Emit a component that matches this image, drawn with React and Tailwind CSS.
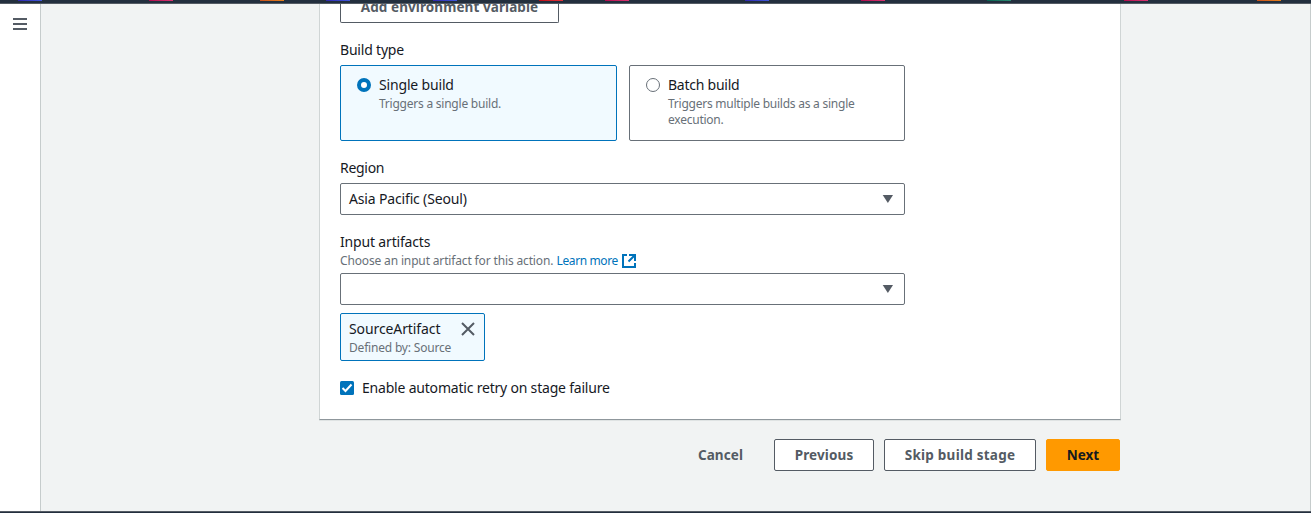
import React from "react";

// Service shortcut tiles: gap before each tile and its gradient
const services = [
  "ml-[18px] from-[#2e27ad] to-[#4157da]",
  "ml-[107px] from-[#b0084d] to-[#db3372]",
  "ml-[87px] from-[#c8511b] to-[#e5801c]",
  "ml-[42px] from-[#2e27ad] to-[#4157da]",
  "ml-[83px] from-[#2e27ad] to-[#4157da]",
  "ml-[82px] from-[#bd0816] to-[#e5333b]",
  "ml-[42px] from-[#b0084d] to-[#db3372]",
  "ml-[116px] from-[#2e27ad] to-[#4157da]",
  "ml-[92px] from-[#b0084d] to-[#db3372]",
  "ml-[102px] from-[#055f4e] to-[#2c8c74]",
  "ml-[113px] from-[#b0084d] to-[#db3372]",
  "ml-[109px] from-[#c8511b] to-[#e5801c]",
];

function Select({ children }) {
  return (
    <div className="flex h-8 items-center justify-between rounded-xs border border-[#687078] bg-white pr-[11px] pl-2">
      <span className="tracking-[-0.16px]">{children}</span>
      <svg className="h-2 w-[11px] fill-[#545b64]" viewBox="0 0 11 8">
        <path d="M0.7 0H11L5.9 8z" />
      </svg>
    </div>
  );
}

function Button({ className, children }) {
  return (
    <button className={"flex h-8 shrink-0 items-center justify-center rounded-xs border text-[13.5px] font-bold whitespace-nowrap " + className}>
      {children}
    </button>
  );
}

export default function App() {
  return (
    <div className="flex h-[513px] w-[1311px] flex-col overflow-hidden bg-[#f1f3f3] font-['Noto_Sans','Open_Sans',sans-serif] text-[14px] leading-[22px] text-[#16191f]">
      <header className="flex h-1 shrink-0 border-b border-[#545b64] bg-[#232f3e]">
        {services.map((tile, i) => (
          <div key={i} className={"h-px w-6 shrink-0 bg-linear-to-r " + tile} />
        ))}
      </header>

      <div className="flex min-h-0 flex-1">
        <aside className="w-[41px] shrink-0 border-r border-[#c6cccc] bg-white pt-[14px] pl-[13px]">
          <svg className="h-3 w-[14px] fill-[#545b64]" viewBox="0 0 14 12">
            <path d="M0 0h14v2H0zM0 5h14v2H0zM0 10h14v2H0z" />
          </svg>
        </aside>

        <main className="flex-1 border-r border-[#c6cccc] pl-[278px]">
          <section className="h-[416px] w-[802px] border border-t-0 border-[#d0d5d5] border-b-[#8f979c] bg-white px-5 shadow-[0_1px_0_#dfe3e3]">
            <div className="h-[19px] w-[219px] overflow-hidden rounded-b-xs border border-t-0 border-[#545b64] text-center text-[13.5px] font-bold text-[#545b64]">
              <div className="-mt-2 tracking-[0.08px]">Add environment variable</div>
            </div>

            <div className="mt-4 tracking-[-0.2px]">Build type</div>
            <div className="mt-1 flex w-[565px] gap-3">
              <div className="flex h-[76px] w-[277px] rounded-xs border border-[#0073bb] bg-[#f1faff] pt-2 pl-4">
                <svg className="mt-1 h-[14px] w-[14px] shrink-0" viewBox="0 0 14 14">
                  <circle cx="7" cy="7" r="5" fill="#fff" stroke="#0073bb" strokeWidth="4" />
                </svg>
                <div className="ml-2">
                  <div className="tracking-[-0.17px]">Single build</div>
                  <div className="text-[12px] leading-4 tracking-[-0.23px] text-[#687078]">Triggers a single build.</div>
                </div>
              </div>
              <div className="flex h-[76px] w-[276px] rounded-xs border border-[#687078] bg-white pt-2 pl-4">
                <svg className="mt-1 h-[14px] w-[14px] shrink-0" viewBox="0 0 14 14">
                  <circle cx="7" cy="7" r="6.5" fill="#fff" stroke="#687078" />
                </svg>
                <div className="ml-2">
                  <div className="tracking-[-0.25px]">Batch build</div>
                  <div className="text-[12px] leading-4 tracking-[-0.24px] text-[#687078]">
                    Triggers multiple builds as a single
                    <br />
                    execution.
                  </div>
                </div>
              </div>
            </div>

            <div className="mt-4 w-[565px]">
              <div className="mb-1 tracking-[-0.3px]">Region</div>
              <Select>Asia Pacific (Seoul)</Select>
            </div>

            <div className="mt-4 w-[565px]">
              <div className="tracking-[-0.17px]">Input artifacts</div>
              <div className="mb-1 flex h-4 items-center text-[12px] leading-4 whitespace-nowrap text-[#687078]">
                <span className="w-[216.5px] tracking-[-0.15px]">Choose an input artifact for this action.</span>
                <a className="w-[65.5px] tracking-[-0.38px] text-[#0073bb]">Learn more</a>
                <svg className="h-[14px] w-[14px]" viewBox="0 0 14 14" fill="none" stroke="#0073bb" strokeWidth="2">
                  <path d="M5 1H1v12h12V9" />
                  <path d="M7 1h6v6M13 1L6.5 7.5" />
                </svg>
              </div>
              <Select />
            </div>

            <div className="mt-2 flex h-12 w-[145px] justify-between rounded-xs border border-[#0073bb] bg-[#f1faff] pt-1 pr-[9px] pl-2">
              <div className="whitespace-nowrap">
                <div className="tracking-[-0.1px]">SourceArtifact</div>
                <div className="text-[12px] leading-4 tracking-[-0.19px] text-[#687078]">Defined by: Source</div>
              </div>
              <svg className="mt-1 -ml-4 h-[14px] w-[14px] shrink-0" viewBox="0 0 14 14" stroke="#545b64" strokeWidth="2">
                <path d="M1 1l12 12M13 1L1 13" />
              </svg>
            </div>

            <div className="mt-4 flex items-center gap-2">
              <svg className="h-[14px] w-[14px]" viewBox="0 0 14 14">
                <rect width="14" height="14" rx="1.5" fill="#0073bb" />
                <path d="M2.5 7l3 3 6-6.5" fill="none" stroke="#fff" strokeWidth="2" />
              </svg>
              <span className="tracking-[-0.2px]">Enable automatic retry on stage failure</span>
            </div>
          </section>

          <div className="mt-[19px] flex w-[801px] justify-end gap-[10px]">
            <Button className="w-[87px] border-transparent text-[#545b64]"><span className="tracking-[0.1px]">Cancel</span></Button>
            <Button className="w-[100px] border-[#545b64] bg-white text-[#545b64]"><span className="tracking-[0.13px]">Previous</span></Button>
            <Button className="w-[152px] border-[#545b64] bg-white text-[#545b64]"><span className="tracking-[0.25px]">Skip build stage</span></Button>
            <Button className="w-[74px] border-[#ff9900] bg-[#ff9900] text-[#16191f]"><span>Next</span></Button>
          </div>
        </main>
      </div>
      <footer className="h-0.5 shrink-0 border-t border-[#545b64] bg-[#232f3e]" />
    </div>
  );
}
